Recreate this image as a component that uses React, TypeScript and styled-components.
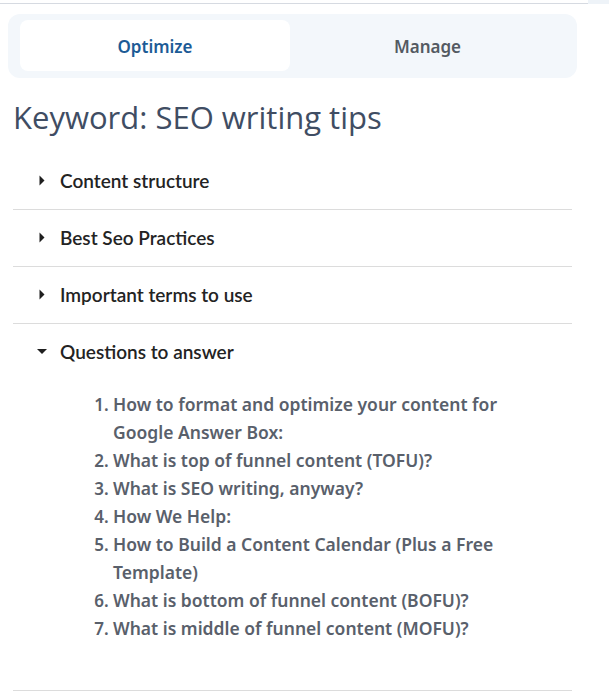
import React, { useState } from 'react';
import styled, { createGlobalStyle } from 'styled-components';

const GlobalStyle = createGlobalStyle`
  html, body {
    margin: 0;
    padding: 0;
    background: #ffffff;
  }
  * {
    box-sizing: border-box;
  }
`;

const TopStrip = styled.div`
  display: flex;
  align-items: flex-start;
`;

const TopRule = styled.div`
  flex: 1;
  height: 4px;
  border-bottom: 1px solid #d6dae1;
`;

const TopCorner = styled.div`
  width: 21px;
  height: 4px;
  background: #eef3f8;
`;

const Page = styled.div`
  padding: 10px 32px 0 8px;
`;

const TabBar = styled.div`
  display: grid;
  grid-template-columns: 270px 1fr;
  padding: 6px 12px 7px;
  background: #f3f7fb;
  border-radius: 12px;
`;

const Tab = styled.button<{ $active?: boolean }>`
  height: 51px;
  padding-top: 2px;
  border: none;
  border-radius: 8px;
  background: ${p => (p.$active ? '#ffffff' : 'transparent')};
  color: ${p => (p.$active ? '#1d5b96' : '#545a62')};
  font-family: "Noto Sans", "Open Sans", sans-serif;
  font-size: 17px;
  font-weight: 600;
  cursor: pointer;
`;

const Heading = styled.h1`
  margin: 19px 0 15px 5px;
  font-family: "Open Sans", "Noto Sans", sans-serif;
  font-size: 31px;
  line-height: 41px;
  font-weight: 400;
  color: #3f4d63;
`;

const Accordion = styled.div`
  margin: 0 5px;
`;

const Section = styled.div`
  border-bottom: 1px solid #dcdcdc;
`;

const SectionHeader = styled.div`
  display: flex;
  align-items: center;
  gap: 12px;
  height: 56px;
  padding: 0 0 2px 24px;
  font-family: Lato, "Liberation Sans", sans-serif;
  font-size: 19px;
  font-weight: 600;
  color: #232323;
  cursor: pointer;
`;

const Caret = styled.svg`
  width: 11px;
  height: 11px;
  flex: none;
  fill: #1f1f1f;
`;

const QuestionList = styled.ol`
  margin: 0;
  padding: 10px 56px 48px 100px;
  font-family: "Noto Sans", "Open Sans", sans-serif;
  font-size: 17.5px;
  line-height: 28px;
  font-weight: 600;
  color: #59606b;

  li::marker {
    font-size: 17px;
  }
`;

const sections = [
  'Content structure',
  'Best Seo Practices',
  'Important terms to use',
  'Questions to answer',
];

const questions = [
  'How to format and optimize your content for Google Answer Box:',
  'What is top of funnel content (TOFU)?',
  'What is SEO writing, anyway?',
  'How We Help:',
  'How to Build a Content Calendar (Plus a Free Template)',
  'What is bottom of funnel content (BOFU)?',
  'What is middle of funnel content (MOFU)?',
];

const App: React.FC = () => {
  const [tab, setTab] = useState('optimize');
  const [open, setOpen] = useState(3);

  return (
    <>
      <GlobalStyle />
      <TopStrip>
        <TopRule />
        <TopCorner />
      </TopStrip>
      <Page>
        <TabBar>
          <Tab $active={tab === 'optimize'} onClick={() => setTab('optimize')}>Optimize</Tab>
          <Tab $active={tab === 'manage'} onClick={() => setTab('manage')}>Manage</Tab>
        </TabBar>
        <Heading>Keyword: SEO writing tips</Heading>
        <Accordion>
          {sections.map((title, i) => (
            <Section key={title}>
              <SectionHeader onClick={() => setOpen(open === i ? -1 : i)}>
                <Caret viewBox="0 0 11 11">
                  {open === i ? (
                    <polygon points="0,3 10,3 5,8" />
                  ) : (
                    <polygon points="2.5,0.5 7.5,5.5 2.5,10.5" />
                  )}
                </Caret>
                {title}
              </SectionHeader>
              {open === i && i === 3 && (
                <QuestionList>
                  {questions.map(q => (
                    <li key={q}>{q}</li>
                  ))}
                </QuestionList>
              )}
            </Section>
          ))}
        </Accordion>
      </Page>
    </>
  );
};

export default App;
